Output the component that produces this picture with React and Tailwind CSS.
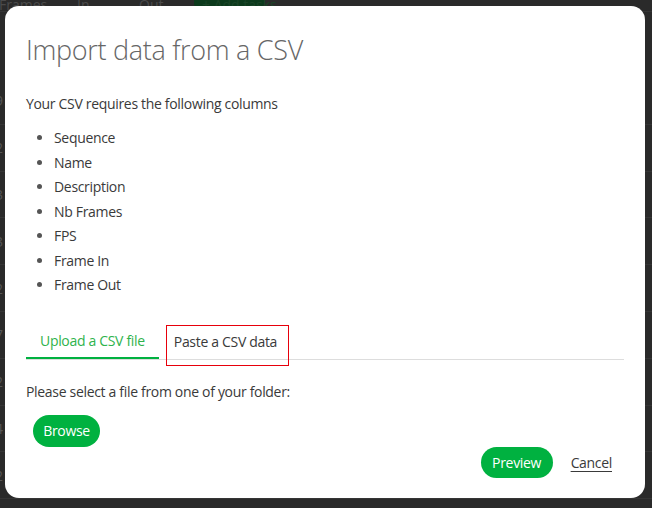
import React from "react";

const font = { fontFamily: '"Open Sans", "Noto Sans", sans-serif' };

function Background() {
  const nums = ["9", "2", "3", "3", "2", "7", "2", "4", "2"];
  return (
    <div className="w-full h-full bg-[#2a2a2a] text-[#4a4a4a] text-[14px]" style={font}>
      <div className="h-[12px] flex items-end border-b border-[#353535] relative">
        <div className="flex items-end gap-0 -mb-[2px]">
          <span className="w-[78px] leading-[16px] -ml-[1px]">Frames</span>
          <span className="w-[62px] leading-[16px]">In</span>
          <span className="w-[55px] leading-[16px]">Out</span>
          <span className="h-[22px] w-[70px] -mt-[10px] rounded-b-[10px] bg-[#0c3a1c] text-[#1a4427] leading-[16px] px-2 flex items-end whitespace-nowrap">
            + Add tasks
          </span>
        </div>
      </div>
      <div className="h-[66px]" />
      {nums.map((n, i) => (
        <div key={i} className="h-[46.8px] border-b border-[#353535] flex items-center">
          <span className="-ml-[5px] text-[#555555]">{n}</span>
        </div>
      ))}
    </div>
  );
}

export default function App() {
  const cols = ["Sequence", "Name", "Description", "Nb Frames", "FPS", "Frame In", "Frame Out"];
  return (
    <div className="relative w-[652px] h-[508px] overflow-hidden" style={font}>
      <Background />
      <div className="absolute left-[5px] top-[6px] w-[640px] h-[492px] bg-white rounded-[14px] px-[21px] flex flex-col tracking-[-0.32px]">
        <h1 className="pt-[26px] text-[27px] leading-[36px] font-light text-[#666666] tracking-[-0.3px]">
          Import data from a CSV
        </h1>
        <p className="mt-[26px] text-[14px] leading-[20px] text-[#3a3a3a]">
          Your CSV requires the following columns
        </p>
        <ul className="mt-[12px] list-disc pl-[28px] text-[14px] leading-[24.5px] text-[#3a3a3a] marker:text-[#555]">
          {cols.map((c) => (
            <li key={c}>{c}</li>
          ))}
        </ul>
        <div className="mt-[26px] flex border-b border-[#dddddd] text-[14px]">
          <div className="h-[35px] px-[14px] flex items-center border-b-2 border-[#00b140] -mb-[1px] text-[#2fb34c]">
            Upload a CSV file
          </div>
          <div className="relative h-[35px] px-[15px] flex items-center text-[#3a3a3a]">
            Paste a CSV data
            <span className="absolute left-[7px] top-[1px] w-[123px] h-[41px] border border-solid border-red-600 pointer-events-none" />
          </div>
        </div>
        <p className="mt-[22px] text-[14px] leading-[20px] text-[#3a3a3a]">
          Please select a file from one of your folder:
        </p>
        <div className="mt-[13px] pl-[7px]">
          <button className="h-[32px] w-[67px] rounded-full bg-[#00b140] text-white text-[14px] flex items-center justify-center">
            Browse
          </button>
        </div>
        <div className="flex justify-end items-center pr-[12px]">
          <button className="h-[31px] w-[72px] rounded-full bg-[#00b140] text-white text-[14px] flex items-center justify-center">
            Preview
          </button>
          <span className="ml-[18px] text-[14px] text-[#3a3a3a] underline underline-offset-[3px]">Cancel</span>
        </div>
      </div>
    </div>
  );
}
